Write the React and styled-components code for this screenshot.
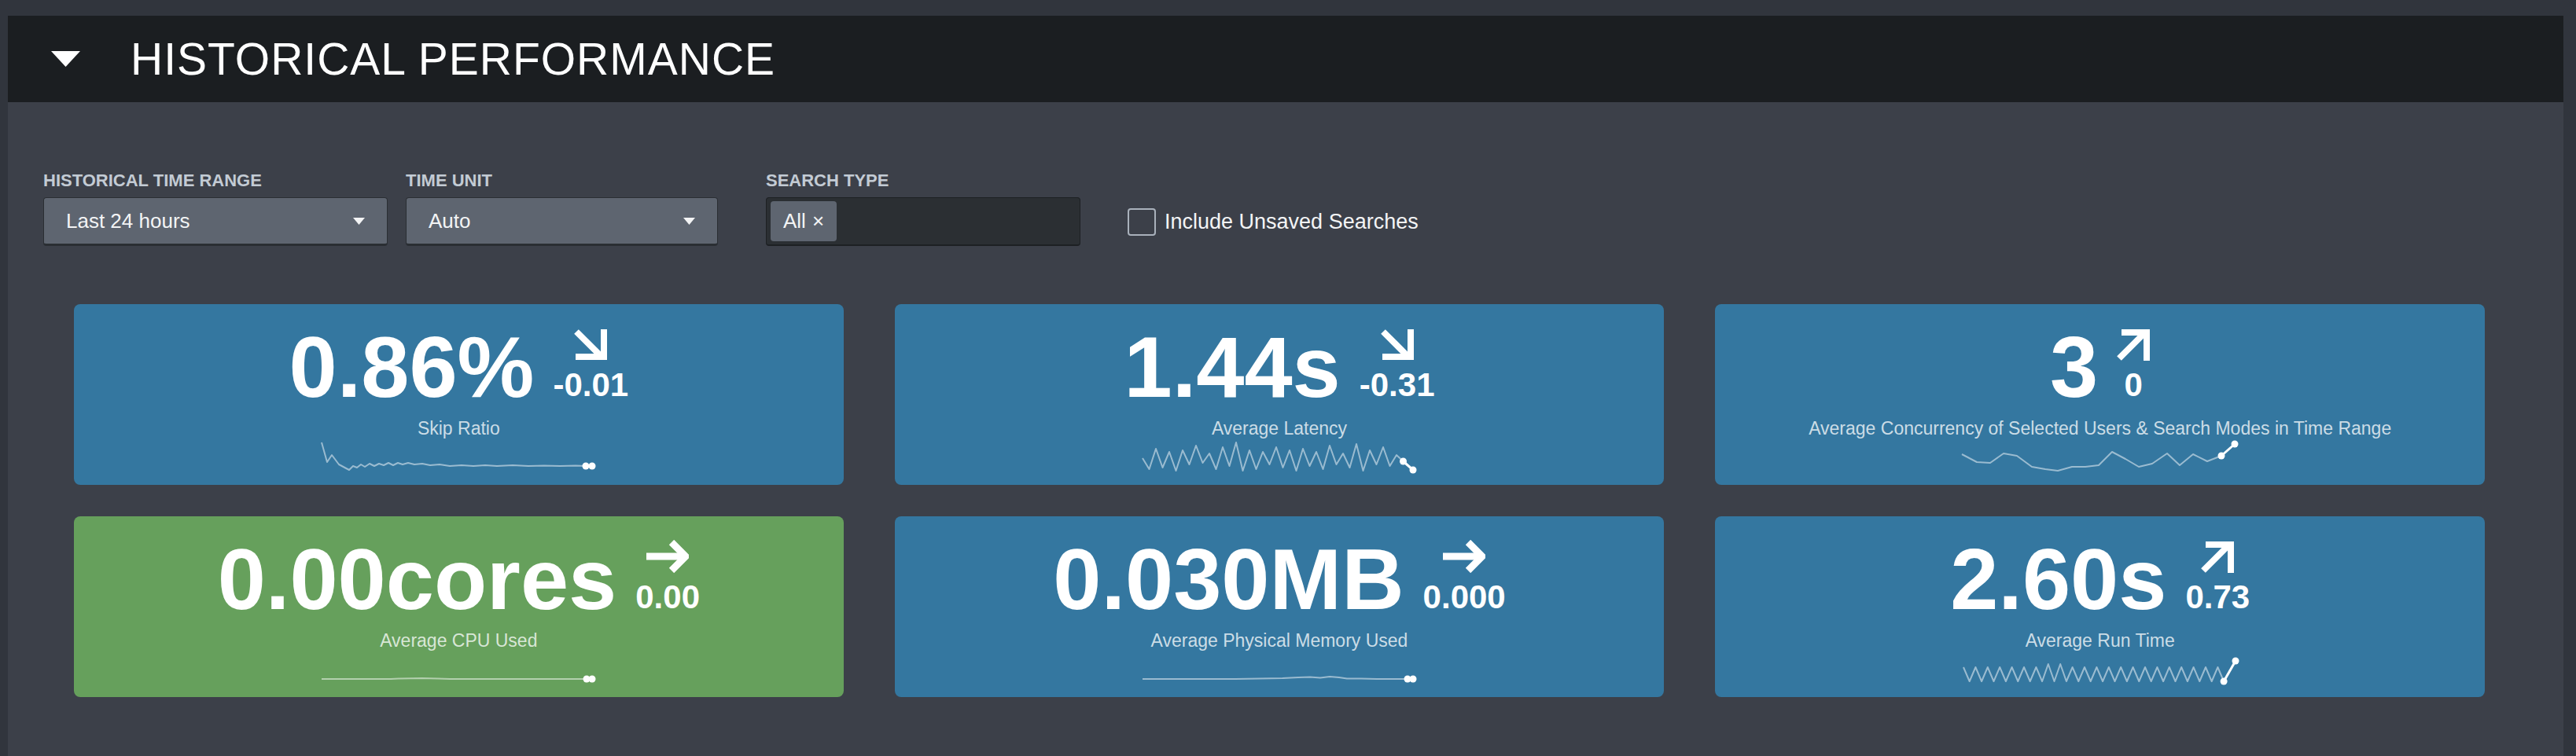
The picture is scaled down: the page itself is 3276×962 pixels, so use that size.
import React from 'react';
import styled, { createGlobalStyle } from 'styled-components';

const GlobalStyle = createGlobalStyle`
  html, body { margin: 0; padding: 0; background: #31353d; }
  body { font-family: "Liberation Sans", Arial, sans-serif; overflow: hidden; }
  * { box-sizing: border-box; }
`;

const Page = styled.div`
  padding: 20px 16px 0 10px;
  height: 962px;
`;

const Panel = styled.section`
  background: #3c4049;
  height: 942px;
`;

const Header = styled.header`
  height: 110px;
  background: #1b1e21;
  display: flex;
  align-items: center;
  gap: 64px;
  padding-left: 55px;
`;

const Title = styled.h2`
  margin: 0;
  font-size: 57px;
  line-height: 1;
  font-weight: 400;
  letter-spacing: 1px;
  color: #ffffff;
`;

const Body = styled.div`
  padding: 89px 100px 0 45px;
`;

const Controls = styled.div`
  display: flex;
  align-items: flex-end;
`;

const Field = styled.div`
  display: flex;
  flex-direction: column;
  width: ${(p) => p.$w}px;
  margin-right: ${(p) => p.$mr}px;
`;

const FieldLabel = styled.label`
  font-size: 22px;
  line-height: 22px;
  font-weight: 700;
  color: #c3cbd4;
  text-transform: uppercase;
  margin-bottom: 10px;
`;

const Select = styled.div`
  height: 62px;
  background: #5e6570;
  border: 1px solid #2a2e33;
  border-bottom-width: 3px;
  border-radius: 4px;
  display: flex;
  align-items: center;
  justify-content: space-between;
  padding: 0 28px 0 28px;
  font-size: 26px;
  color: #f3f4f5;
`;

const MultiSelect = styled.div`
  height: 62px;
  background: #2b2f33;
  border: 1px solid #1d2023;
  border-bottom-width: 2px;
  border-radius: 4px;
  padding: 4px 5px;
  display: flex;
  align-items: stretch;
`;

const Chip = styled.span`
  background: #5e6570;
  border-radius: 4px;
  padding: 0 16px;
  display: flex;
  align-items: center;
  gap: 8px;
  font-size: 26px;
  color: #f3f4f5;
`;

const CheckRow = styled.div`
  height: 62px;
  display: flex;
  align-items: center;
  gap: 11px;
`;

const Checkbox = styled.span`
  width: 36px;
  height: 35px;
  border: 2px solid #a9b1bb;
  border-radius: 4px;
`;

const CheckLabel = styled.span`
  font-size: 27px;
  color: #f3f4f5;
`;

const Grid = styled.div`
  margin: 74px 0 0 39px;
  display: grid;
  grid-template-columns: repeat(3, 1fr);
  column-gap: 65px;
  row-gap: 40px;
`;

const Card = styled.div`
  height: 230px;
  border-radius: 8px;
  background: ${(p) => p.$bg};
  padding-top: 25px;
  display: flex;
  flex-direction: column;
  align-items: center;
  color: #ffffff;
`;

const ValueRow = styled.div`
  display: flex;
  align-items: flex-end;
  gap: 24px;
`;

const BigValue = styled.span`
  font-size: 110px;
  line-height: 110px;
  font-weight: 700;
`;

const DeltaCol = styled.div`
  display: flex;
  flex-direction: column;
  align-items: center;
  gap: 10px;
  margin-bottom: 11px;
`;

const DeltaValue = styled.span`
  font-size: 42px;
  line-height: 42px;
  font-weight: 700;
`;

const CardLabel = styled.div`
  margin-top: 12px;
  font-size: 23px;
  line-height: 23px;
  color: rgba(255, 255, 255, 0.75);
`;

const Spark = styled.svg`
  margin-top: 6px;
  display: block;
  overflow: visible;
`;

const Caret = () => (
  <svg width="15" height="9" viewBox="0 0 15 9">
    <polygon points="0,0 15,0 7.5,9" fill="#f3f4f5" />
  </svg>
);

const Collapse = () => (
  <svg width="37" height="20" viewBox="0 0 37 20">
    <polygon points="0,0 37,0 18.5,20" fill="#ffffff" />
  </svg>
);

const ArrowDown = () => (
  <svg width="42" height="40" viewBox="0 0 42 40">
    <g fill="none" stroke="#fff" strokeWidth="8" strokeLinejoin="miter">
      <line x1="3" y1="3" x2="34" y2="34" />
      <polyline points="2,35 38,35 38,0" />
    </g>
  </svg>
);

const ArrowUp = () => (
  <svg width="42" height="40" viewBox="0 0 42 40">
    <g fill="none" stroke="#fff" strokeWidth="8" strokeLinejoin="miter">
      <line x1="3" y1="37" x2="34" y2="6" />
      <polyline points="6,4 38,4 38,40" />
    </g>
  </svg>
);

const ArrowRight = () => (
  <svg width="54" height="42" viewBox="0 0 54 42">
    <g fill="none" stroke="#fff" strokeWidth="9" strokeLinejoin="miter">
      <line x1="0" y1="21" x2="48" y2="21" />
      <polyline points="32,3 50,21 32,39" />
    </g>
  </svg>
);

const arrows = { down: ArrowDown, up: ArrowUp, right: ArrowRight };

const Sparkline = ({ points }) => {
  const head = points.slice(0, -1);
  const a = points[points.length - 2];
  const b = points[points.length - 1];
  return (
    <Spark width="352" height="38" viewBox="0 0 352 38">
      <polyline
        points={head.map((p) => p.join(',')).join(' ')}
        fill="none"
        stroke="rgba(255,255,255,0.5)"
        strokeWidth="2"
        strokeLinejoin="round"
      />
      <line x1={a[0]} y1={a[1]} x2={b[0]} y2={b[1]} stroke="#fff" strokeWidth="3" />
      <circle cx={a[0]} cy={a[1]} r="4.5" fill="#fff" />
      <circle cx={b[0]} cy={b[1]} r="4.5" fill="#fff" />
    </Spark>
  );
};

const zig = (vals, step, x0 = 2) => vals.map((v, i) => [x0 + i * step, v]);

const skip = [
  [2, 0], [9, 25], [15, 16], [24, 28], [37, 35], [42, 30], [47, 32], [52, 28], [57, 31],
  [63, 27], [69, 30], [75, 27], [81, 29], [87, 26], [93, 29], [99, 26], [105, 28], [112, 26],
  [120, 28], [130, 27], [140, 29], [152, 28], [165, 30], [180, 29], [195, 30], [210, 29],
  [225, 30], [245, 29], [265, 30], [285, 29.5], [305, 30], [325, 29.5], [338, 30], [346, 30],
];

const latencyVals = [20, 34, 8, 32, 12, 36, 10, 28, 4, 26, 14, 34, 6, 30, 0, 36, 10, 34, 12, 28, 6, 32, 10, 36, 8, 30, 12, 34, 4, 28, 14, 32, 2, 36, 10, 28, 6, 30, 16, 24];
const latency = [...zig(latencyVals, 8.5), [346, 35]];

const concurrency = [
  [0, 15], [19, 25], [36, 26], [53, 14], [70, 17], [89, 31], [106, 34], [122, 36], [140, 31],
  [157, 31], [174, 29], [191, 12], [208, 21], [225, 31], [242, 27], [261, 14], [277, 29],
  [294, 15], [312, 24], [330, 17], [347, 2],
];

const cpu = [
  [2, 31], [90, 31], [100, 30.5], [130, 30], [150, 30.5], [165, 31], [250, 31], [339, 31], [346, 31],
];

const memory = [
  [2, 31], [120, 31], [180, 30], [200, 29], [215, 28.5], [228, 29.5], [240, 28], [252, 29],
  [262, 30.5], [280, 30.5], [300, 31], [339, 31], [346, 31],
];

const runVals = Array.from({ length: 44 }, (_, i) => (i % 2 === 0 ? (i === 14 || i === 16 ? 12 : 16) : 34));
const runtime = [...zig(runVals, 7.7), [348, 8]];

const cards = [
  { value: '0.86%', delta: '-0.01', dir: 'down', label: 'Skip Ratio', spark: skip, bg: '#3477a0' },
  { value: '1.44s', delta: '-0.31', dir: 'down', label: 'Average Latency', spark: latency, bg: '#3477a0' },
  { value: '3', delta: '0', dir: 'up', label: 'Average Concurrency of Selected Users & Search Modes in Time Range', spark: concurrency, bg: '#3477a0' },
  { value: '0.00cores', delta: '0.00', dir: 'right', label: 'Average CPU Used', spark: cpu, bg: '#66a05c' },
  { value: '0.030MB', delta: '0.000', dir: 'right', label: 'Average Physical Memory Used', spark: memory, bg: '#3477a0' },
  { value: '2.60s', delta: '0.73', dir: 'up', label: 'Average Run Time', spark: runtime, bg: '#3477a0' },
];

export default function App() {
  return (
    <>
      <GlobalStyle />
      <Page>
        <Panel>
          <Header>
            <Collapse />
            <Title>HISTORICAL PERFORMANCE</Title>
          </Header>
          <Body>
            <Controls>
              <Field $w={438} $mr={23}>
                <FieldLabel>Historical Time Range</FieldLabel>
                <Select>
                  <span>Last 24 hours</span>
                  <Caret />
                </Select>
              </Field>
              <Field $w={397} $mr={61}>
                <FieldLabel>Time Unit</FieldLabel>
                <Select>
                  <span>Auto</span>
                  <Caret />
                </Select>
              </Field>
              <Field $w={400} $mr={60}>
                <FieldLabel>Search Type</FieldLabel>
                <MultiSelect>
                  <Chip>
                    All <span>×</span>
                  </Chip>
                </MultiSelect>
              </Field>
              <CheckRow>
                <Checkbox />
                <CheckLabel>Include Unsaved Searches</CheckLabel>
              </CheckRow>
            </Controls>
            <Grid>
              {cards.map((c) => {
                const Arrow = arrows[c.dir];
                return (
                  <Card key={c.label} $bg={c.bg}>
                    <ValueRow>
                      <BigValue>{c.value}</BigValue>
                      <DeltaCol>
                        <Arrow />
                        <DeltaValue>{c.delta}</DeltaValue>
                      </DeltaCol>
                    </ValueRow>
                    <CardLabel>{c.label}</CardLabel>
                    <Sparkline points={c.spark} />
                  </Card>
                );
              })}
            </Grid>
          </Body>
        </Panel>
      </Page>
    </>
  );
}
